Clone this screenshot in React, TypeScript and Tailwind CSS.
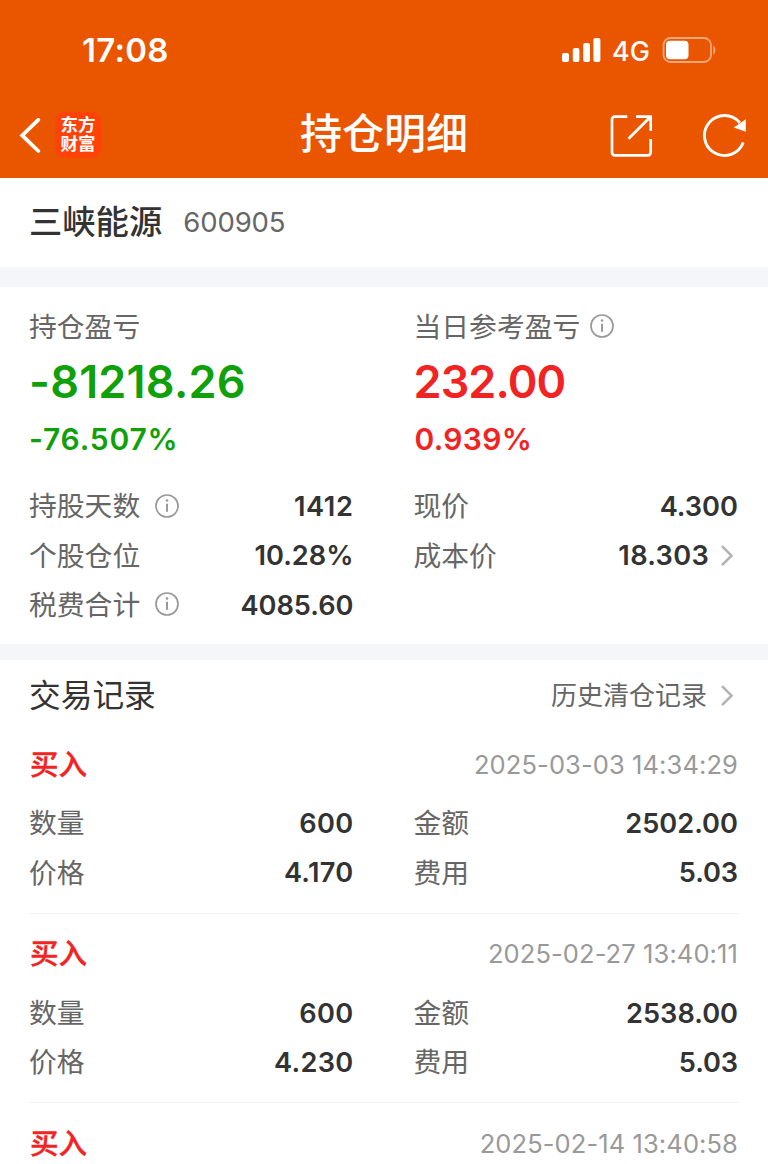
import clsx from 'clsx';
import * as React from 'react';

interface ITrade {
  time: string;
  details?: {
    quantity: string;
    price: string;
    amount: string;
    fee: string;
  };
}

const trades: ITrade[] = [
  {
    time: '2025-03-03 14:34:29',
    details: { quantity: '600', price: '4.170', amount: '2502.00', fee: '5.03' },
  },
  {
    time: '2025-02-27 13:40:11',
    details: { quantity: '600', price: '4.230', amount: '2538.00', fee: '5.03' },
  },
  {
    time: '2025-02-14 13:40:58',
  },
];

const InfoIcon = ({ className }: { className?: string }) => (
  <svg className={clsx('h-6 w-6 shrink-0', className)} viewBox="0 0 24 24" fill="none" stroke="#999999">
    <circle cx="12" cy="12" r="11" strokeWidth="1.7" />
    <path d="M12 9.8v8" strokeWidth="2" />
    <circle cx="12" cy="6.5" r="1.3" fill="#999999" stroke="none" />
  </svg>
);

const Chevron = ({ className }: { className?: string }) => (
  <svg className={clsx('h-[22px] w-[14px] shrink-0', className)} viewBox="0 0 14 22" fill="none">
    <path d="M2 1.2 11.5 10.7 2 20.2" stroke="#b3b3b3" strokeWidth="2.6" />
  </svg>
);

const StatusBar = () => (
  <div className="flex h-[100px] items-center pr-[51px] pl-[82px]">
    <div className="text-[33px] font-semibold tracking-[0.3px]">17:08</div>
    <svg className="ml-auto h-6 w-10" viewBox="0 0 40 24" fill="currentColor">
      <rect x="1" y="15" width="7" height="9" rx="2" />
      <rect x="11.8" y="10" width="6.6" height="14" rx="2" />
      <rect x="22.2" y="5" width="6.8" height="19" rx="2" />
      <rect x="32.4" y="0" width="7" height="24" rx="2" />
    </svg>
    <div className="ml-[11px] pt-0.5 text-[27px] font-medium">4G</div>
    <svg className="ml-[12px] h-[26px] w-[55px]" viewBox="0 0 55 26" fill="none">
      <rect x="1.5" y="1" width="47.5" height="24" rx="7" stroke="#f6a77b" strokeWidth="1.8" />
      <path d="M51.3 8.5c2.8 1.6 2.8 7.4 0 9z" fill="#f6a77b" />
      <rect x="4" y="3.8" width="22.5" height="18.4" rx="4" fill="#ffffff" />
    </svg>
  </div>
);

const NavBar = () => (
  <div className="flex h-[72px] items-center pr-[20px] pl-[19px]">
    <svg className="h-9 w-[22px]" viewBox="0 0 22 36" fill="none" stroke="currentColor" strokeWidth="3.8">
      <path d="M19.3 1.8 3.2 17.4 19.3 33" strokeLinecap="round" />
    </svg>
    <div className="mb-[3px] ml-[14px] flex h-[46px] w-[46px] flex-col items-center justify-center rounded-[9px] bg-[#ff4208] pb-px text-[17.5px] leading-[19px] font-bold">
      <span>东方</span>
      <span>财富</span>
    </div>
    <div className="flex-1 pb-1 pl-[199px] text-[42px] leading-[60px] font-medium whitespace-nowrap">持仓明细</div>
    <svg className="h-[44px] w-[44px]" viewBox="0 0 44 44" fill="none" stroke="currentColor" strokeWidth="2.7">
      <path d="M17.3 2.6H4.8A2.8 2.8 0 0 0 2 5.4v33.2a2.8 2.8 0 0 0 2.8 2.8h33.1a2.8 2.8 0 0 0 2.8-2.8V25" />
      <path d="M26 2.6h14.7V17M40.5 2.8 18.5 24.8" />
      <path d="M35 2.6h5.7v5.7z" fill="currentColor" stroke="none" />
    </svg>
    <svg className="ml-[48px] h-[44px] w-[46px]" viewBox="0 0 46 44" fill="none">
      <path d="M41.2 28.6A20 20 0 1 1 37.8 8.7" stroke="currentColor" strokeWidth="2.9" />
      <path d="M43.8 5.3v12.5L31.8 13.4z" fill="currentColor" />
    </svg>
  </div>
);

interface IRowProps {
  label: string;
  value: string;
  valueClassName?: string;
  info?: boolean;
  link?: boolean;
}

const Row = ({ label, value, valueClassName = 'tracking-[0.3px]', info, link }: IRowProps) => (
  <div className="flex h-[49.3px] items-center">
    <span className="-ml-px pt-px text-[27.8px] text-[#666666]">{label}</span>
    {info && <InfoIcon className="mb-0.5 ml-[15px]" />}
    <span className={clsx('ml-auto text-[27.2px] font-semibold', valueClassName)}>{value}</span>
    {link && <Chevron className="mr-1 ml-[11px]" />}
  </div>
);

interface ISummaryProps {
  label: string;
  amount: string;
  amountClassName: string;
  percent: string;
  percentClassName: string;
  className: string;
  info?: boolean;
}

const Summary = ({ label, amount, amountClassName, percent, percentClassName, className, info }: ISummaryProps) => (
  <div>
    <div className="flex h-10 items-center">
      <span className="-ml-px pt-[3px] text-[27.8px] text-[#666666]">{label}</span>
      {info && <InfoIcon className="ml-[10px]" />}
    </div>
    <div className={className}>
      <div className={clsx('flex h-[70px] items-center text-[45px] font-semibold', amountClassName)}>{amount}</div>
      <div className={clsx('flex h-[46px] items-center text-[30px] font-semibold', percentClassName)}>{percent}</div>
    </div>
  </div>
);

const Trade = ({ time, details }: ITrade) => (
  <div className="border-[#f3f3f5] px-px pt-[19px] not-last:h-[189.5px] not-last:border-b">
    <div className="flex h-[43px] items-center justify-between">
      <span className="pt-px text-[28.5px] font-medium text-[#f12323] [-webkit-text-stroke:0.4px]">买入</span>
      <span className="text-[25.5px] tracking-[0.1px] text-[#999999]">{time}</span>
    </div>
    {details && (
      <div className="mt-[13px] grid grid-cols-2 gap-x-[61px]">
        <Row label="数量" value={details.quantity} />
        <Row label="金额" value={details.amount} valueClassName="tracking-[0px]" />
        <Row label="价格" value={details.price} />
        <Row label="费用" value={details.fee} valueClassName="tracking-[-0.1px]" />
      </div>
    )}
  </div>
);

export default function App() {
  return (
    <div className="h-[1164px] w-[768px] overflow-hidden bg-white font-['Inter','Noto_Sans_CJK_SC',sans-serif] leading-none text-[#333333]">
      <header className="h-[178px] bg-[#ea5500] text-white">
        <StatusBar />
        <NavBar />
      </header>

      <div className="flex h-[89px] items-center pl-[29px]">
        <span className="text-[33.3px] font-medium">三峡能源</span>
        <span className="ml-[21px] text-[27.5px] tracking-[-0.1px] text-[#666666]">600905</span>
      </div>
      <div className="h-5 bg-[#f5f6f9]" />

      <section className="h-[357px] px-[30px] pt-[19px]">
        <div className="grid grid-cols-2 gap-x-[61px]">
          <Summary
            label="持仓盈亏"
            amount="-81218.26"
            amountClassName="-ml-px tracking-[0.2px]"
            percent="-76.507%"
            percentClassName="-ml-px tracking-[0.8px]"
            className="text-[#0fa00a]"
          />
          <Summary
            label="当日参考盈亏"
            amount="232.00"
            amountClassName="-ml-px tracking-[-0.9px]"
            percent="0.939%"
            percentClassName="tracking-[0.3px]"
            className="text-[#f12323]"
            info
          />
        </div>
        <div className="mt-5 grid grid-cols-2 gap-x-[61px]">
          <Row label="持股天数" value="1412" valueClassName="tracking-[0.6px]" info />
          <Row label="现价" value="4.300" valueClassName="tracking-[0px]" />
          <Row label="个股仓位" value="10.28%" valueClassName="tracking-[0px]" />
          <Row label="成本价" value="18.303" link />
          <Row label="税费合计" value="4085.60" valueClassName="tracking-[0px]" info />
        </div>
      </section>
      <div className="h-4 bg-[#f5f6f9]" />

      <section className="px-[29px]">
        <div className="flex h-16 items-center pt-2 pr-px">
          <span className="text-[31.7px]">交易记录</span>
          <span className="ml-auto text-[26px] text-[#666666]">历史清仓记录</span>
          <Chevron className="mr-1 ml-[13px]" />
        </div>
        {trades.map((trade, index) => (
          <Trade key={index} {...trade} />
        ))}
      </section>
    </div>
  );
}
